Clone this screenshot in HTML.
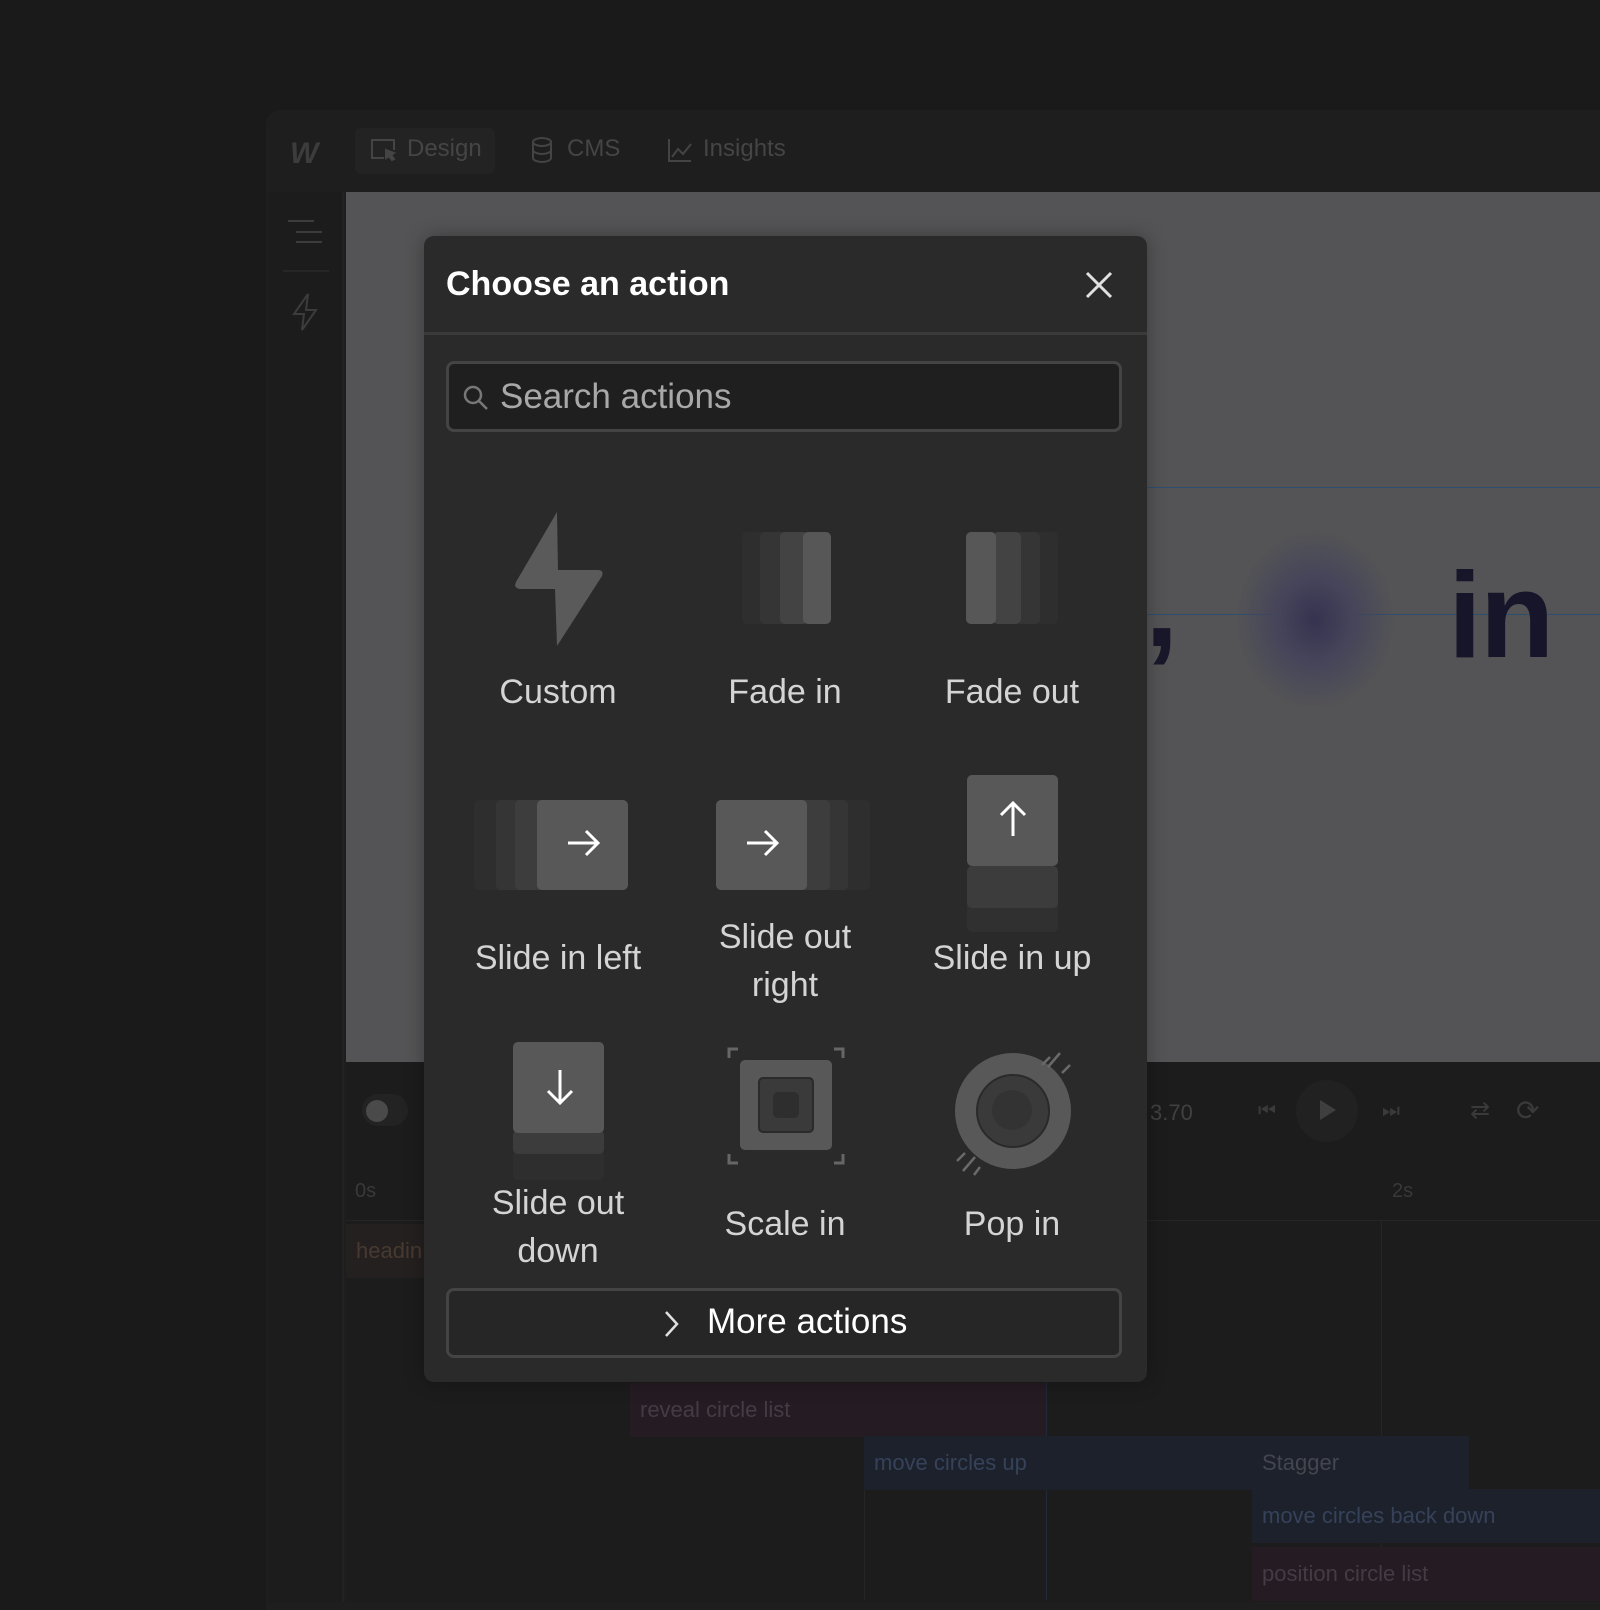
<!DOCTYPE html>
<html><head><style>
*{margin:0;padding:0;box-sizing:border-box}
body{width:1600px;height:1600px;background:#1a1a1b;position:relative;overflow:hidden;font-family:"Liberation Sans",sans-serif}
.a{position:absolute}
.lbl{position:absolute;width:230px;text-align:center;color:#d4d4d4;font-size:34px;line-height:48px}
.bar{position:absolute;border-radius:5px}
.tl{position:absolute;font-size:22px;height:54px;line-height:54px;padding-left:10px;color:#3a4255}
</style></head><body>
<div class="a" style="left:266px;top:110px;width:1340px;height:1500px;background:#1e1e1f;border-radius:14px 0 0 0"></div>
<div class="a" style="left:290px;top:137px;color:#3c3c3c;font-size:30px;font-weight:bold;font-style:italic;letter-spacing:-3px">W</div>
<div class="a" style="left:355px;top:128px;width:140px;height:46px;background:#232324;border-radius:6px"></div>
<svg class="a" style="left:370px;top:138px" width="28" height="26" viewBox="0 0 28 26" fill="none" stroke="#444" stroke-width="2"><path d="M14 20H2V2h22v10"/><path d="M16 12l8 3-3 2 3 4-2 1-3-4-3 2z" fill="#444"/></svg>
<div class="a" style="left:407px;top:135px;color:#454545;font-size:24px">Design</div>
<svg class="a" style="left:531px;top:137px" width="22" height="26" viewBox="0 0 22 26" fill="none" stroke="#444" stroke-width="2"><ellipse cx="11" cy="5" rx="9" ry="4"/><path d="M2 5v16c0 2 4 4 9 4s9-2 9-4V5M2 13c0 2 4 4 9 4s9-2 9-4"/></svg>
<div class="a" style="left:567px;top:135px;color:#454545;font-size:24px">CMS</div>
<svg class="a" style="left:667px;top:137px" width="26" height="26" viewBox="0 0 26 26" fill="none" stroke="#444" stroke-width="2"><path d="M2 2v22h22M5 20l6-8 5 5 8-10"/></svg>
<div class="a" style="left:703px;top:135px;color:#454545;font-size:24px">Insights</div>
<div class="a" style="left:268px;top:192px;width:76px;height:1410px;background:#1c1c1d;border-right:2px solid #222"></div>
<div class="a" style="left:288px;top:220px;width:26px;height:2px;background:#3c3c3c"></div>
<div class="a" style="left:296px;top:231px;width:26px;height:2px;background:#3c3c3c"></div>
<div class="a" style="left:296px;top:241px;width:26px;height:2px;background:#3c3c3c"></div>
<div class="a" style="left:283px;top:270px;width:46px;height:2px;background:#262626"></div>
<svg class="a" style="left:290px;top:292px" width="32" height="40" viewBox="0 0 32 40" fill="none" stroke="#3c3c3c" stroke-width="2"><path d="M18 2L4 22h10l-2 16 14-20H16z"/></svg>
<div class="a" style="left:346px;top:192px;width:1260px;height:870px;background:#545456"></div>
<div class="a" style="left:1147px;top:487px;width:460px;height:1px;background:#2e4e6e"></div>
<div class="a" style="left:1147px;top:614px;width:460px;height:1px;background:#2e4e6e"></div>
<div class="a" style="left:1235px;top:530px;width:160px;height:180px;border-radius:50%;background:radial-gradient(closest-side,#35334f 0%,#45445a 45%,rgba(84,84,86,0) 100%)"></div>
<div class="a" style="left:1145px;top:530px;color:#19172a;font-size:120px;font-weight:bold;line-height:150px">,</div>
<div class="a" style="left:1448px;top:545px;color:#17152a;font-size:122px;font-weight:bold;line-height:140px;letter-spacing:-2px">in</div>
<div class="a" style="left:346px;top:1062px;width:1260px;height:540px;background:#1c1c1d"></div>
<div class="a" style="left:362px;top:1094px;width:46px;height:32px;border-radius:16px;background:#232324"></div>
<div class="a" style="left:366px;top:1100px;width:22px;height:22px;border-radius:50%;background:#4a4a4a"></div>
<div class="a" style="left:355px;top:1180px;color:#393939;font-size:20px">0s</div>
<div class="a" style="left:1150px;top:1100px;color:#404040;font-size:22px">3.70</div>
<div class="a" style="left:1296px;top:1080px;width:62px;height:62px;border-radius:50%;background:#212122"></div>
<div class="a" style="left:1320px;top:1100px;width:0;height:0;border-left:16px solid #3f3f3f;border-top:10px solid transparent;border-bottom:10px solid transparent"></div>
<div class="a" style="left:1258px;top:1100px;color:#3a3a3a;font-size:20px">⏮</div>
<div class="a" style="left:1382px;top:1100px;color:#3a3a3a;font-size:20px">⏭</div>
<div class="a" style="left:1470px;top:1096px;color:#3a3a3a;font-size:24px">⇄</div>
<div class="a" style="left:1516px;top:1094px;color:#3a3a3a;font-size:28px">⟳</div>
<div class="a" style="left:1392px;top:1180px;color:#393939;font-size:20px">2s</div>
<div class="a" style="left:346px;top:1220px;width:1260px;height:1px;background:#252525"></div>
<div class="a" style="left:1381px;top:1220px;width:1px;height:380px;background:#252525"></div>
<div class="a" style="left:864px;top:1440px;width:1px;height:160px;background:#252525"></div>
<div class="a" style="left:1046px;top:1380px;width:1px;height:220px;background:#1f2b3a"></div>
<div class="tl" style="left:346px;top:1224px;width:100px;background:#252020;color:#463a30">headin</div>
<div class="tl" style="left:630px;top:1383px;width:416px;background:#241c22;color:#463a44">reveal circle list</div>
<div class="tl" style="left:864px;top:1436px;width:605px;background:#1c212b;color:#364259">move circles up</div>
<div class="a" style="left:1262px;top:1450px;color:#43464d;font-size:22px">Stagger</div>
<div class="tl" style="left:1252px;top:1489px;width:360px;background:#1c212b;color:#364259">move circles back down</div>
<div class="tl" style="left:1252px;top:1547px;width:360px;background:#241c22;color:#463a44">position circle list</div>
<div class="a" style="left:424px;top:236px;width:723px;height:1146px;background:#2a2a2a;border-radius:10px;box-shadow:0 0 20px rgba(0,0,0,.3)"></div>
<div class="a" style="left:446px;top:265px;color:#fff;font-size:34px;font-weight:bold">Choose an action</div>
<svg class="a" style="left:1084px;top:270px" width="30" height="30" viewBox="0 0 30 30" stroke="#e0e0e0" stroke-width="3"><path d="M3 3l24 24M27 3L3 27"/></svg>
<div class="a" style="left:424px;top:332px;width:723px;height:3px;background:#3a3a3a"></div>
<div class="a" style="left:446px;top:361px;width:676px;height:71px;background:#1f1f1f;border:3px solid #444;border-radius:8px"></div>
<svg class="a" style="left:462px;top:384px" width="28" height="28" viewBox="0 0 28 28" fill="none" stroke="#777" stroke-width="2.5"><circle cx="11" cy="11" r="8"/><path d="M17 17l8 8"/></svg>
<div class="a" style="left:500px;top:377px;color:#a8a8a8;font-size:35px">Search actions</div>
<svg class="a" style="left:512px;top:512px" width="92" height="134" viewBox="0 0 92 134"><path d="M45 0L4 70q-3 6 4 7h35l2 57 45-70q2-6-4-6H46z" fill="#5a5a5a"/></svg>
<div class="bar" style="left:742px;top:532px;width:28px;height:92px;background:#2e2e2e"></div>
<div class="bar" style="left:760px;top:532px;width:28px;height:92px;background:#353535"></div>
<div class="bar" style="left:780px;top:532px;width:28px;height:92px;background:#434343"></div>
<div class="bar" style="left:803px;top:532px;width:28px;height:92px;background:#575757"></div>
<div class="bar" style="left:1036px;top:532px;width:22px;height:92px;background:#2e2e2e"></div>
<div class="bar" style="left:1016px;top:532px;width:24px;height:92px;background:#353535"></div>
<div class="bar" style="left:993px;top:532px;width:28px;height:92px;background:#434343"></div>
<div class="bar" style="left:966px;top:532px;width:30px;height:92px;background:#575757"></div>
<div class="lbl" style="left:443px;top:668px">Custom</div>
<div class="lbl" style="left:670px;top:668px">Fade in</div>
<div class="lbl" style="left:897px;top:668px">Fade out</div>
<div class="bar" style="left:474px;top:800px;width:40px;height:90px;background:#2e2e2e"></div>
<div class="bar" style="left:496px;top:800px;width:40px;height:90px;background:#353535"></div>
<div class="bar" style="left:515px;top:800px;width:40px;height:90px;background:#3d3d3d"></div>
<div class="bar" style="left:537px;top:800px;width:91px;height:90px;background:#585858"></div>
<svg class="a" style="left:566px;top:828px" width="36" height="30" viewBox="0 0 36 30" fill="none" stroke="#fff" stroke-width="3"><path d="M2 15h30M20 3l12 12-12 12"/></svg>
<div class="bar" style="left:830px;top:800px;width:40px;height:90px;background:#2e2e2e"></div>
<div class="bar" style="left:808px;top:800px;width:40px;height:90px;background:#353535"></div>
<div class="bar" style="left:790px;top:800px;width:40px;height:90px;background:#3d3d3d"></div>
<div class="bar" style="left:716px;top:800px;width:91px;height:90px;background:#585858"></div>
<svg class="a" style="left:745px;top:828px" width="36" height="30" viewBox="0 0 36 30" fill="none" stroke="#fff" stroke-width="3"><path d="M2 15h30M20 3l12 12-12 12"/></svg>
<div class="bar" style="left:967px;top:888px;width:91px;height:44px;background:#303030"></div>
<div class="bar" style="left:967px;top:866px;width:91px;height:42px;background:#3c3c3c"></div>
<div class="bar" style="left:967px;top:775px;width:91px;height:91px;background:#585858"></div>
<svg class="a" style="left:998px;top:800px" width="30" height="38" viewBox="0 0 30 38" fill="none" stroke="#fff" stroke-width="3"><path d="M15 36V3M3 15L15 3l12 12"/></svg>
<div class="lbl" style="left:443px;top:934px">Slide in left</div>
<div class="lbl" style="left:670px;top:913px">Slide out<br>right</div>
<div class="lbl" style="left:897px;top:934px">Slide in up</div>
<div class="bar" style="left:513px;top:1150px;width:91px;height:30px;background:#2e2e2e"></div>
<div class="bar" style="left:513px;top:1130px;width:91px;height:24px;background:#3c3c3c"></div>
<div class="bar" style="left:513px;top:1042px;width:91px;height:91px;background:#585858"></div>
<svg class="a" style="left:545px;top:1068px" width="30" height="38" viewBox="0 0 30 38" fill="none" stroke="#fff" stroke-width="3"><path d="M15 2v33M3 23l12 12 12-12"/></svg>
<svg class="a" style="left:726px;top:1046px" width="120" height="120" viewBox="0 0 120 120" fill="none" stroke="#666" stroke-width="3"><path d="M3 12V3h9M108 3h9v9M117 108v9h-9M12 117H3v-9"/></svg>
<div class="bar" style="left:740px;top:1060px;width:92px;height:90px;background:#585858"></div>
<div class="bar" style="left:758px;top:1077px;width:56px;height:56px;background:#3a3a3a;border:2px solid #2a2a2a"></div>
<div class="bar" style="left:773px;top:1092px;width:26px;height:26px;background:#2e2e2e"></div>
<div class="a" style="left:955px;top:1053px;width:116px;height:116px;border-radius:50%;background:#585858"></div>
<div class="a" style="left:976px;top:1074px;width:74px;height:74px;border-radius:50%;background:#3a3a3a;border:2px solid #2a2a2a"></div>
<div class="a" style="left:992px;top:1090px;width:40px;height:40px;border-radius:50%;background:#333"></div>
<svg class="a" style="left:945px;top:1045px" width="135" height="135" viewBox="0 0 135 135" stroke="#6a6a6a" stroke-width="2.5"><path d="M105 12l-8 8M115 8l-12 14M125 20l-8 8M20 108l-8 8M30 112l-12 14M35 122l-6 8"/></svg>
<div class="lbl" style="left:443px;top:1179px">Slide out<br>down</div>
<div class="lbl" style="left:670px;top:1200px">Scale in</div>
<div class="lbl" style="left:897px;top:1200px">Pop in</div>
<div class="a" style="left:446px;top:1288px;width:676px;height:70px;border:3px solid #444;border-radius:8px;background:#262626"></div>
<svg class="a" style="left:662px;top:1310px" width="18" height="28" viewBox="0 0 18 28" fill="none" stroke="#e0e0e0" stroke-width="2.5"><path d="M4 2l11 12L4 26"/></svg>
<div class="a" style="left:707px;top:1302px;color:#fff;font-size:35px">More actions</div>
</body></html>
